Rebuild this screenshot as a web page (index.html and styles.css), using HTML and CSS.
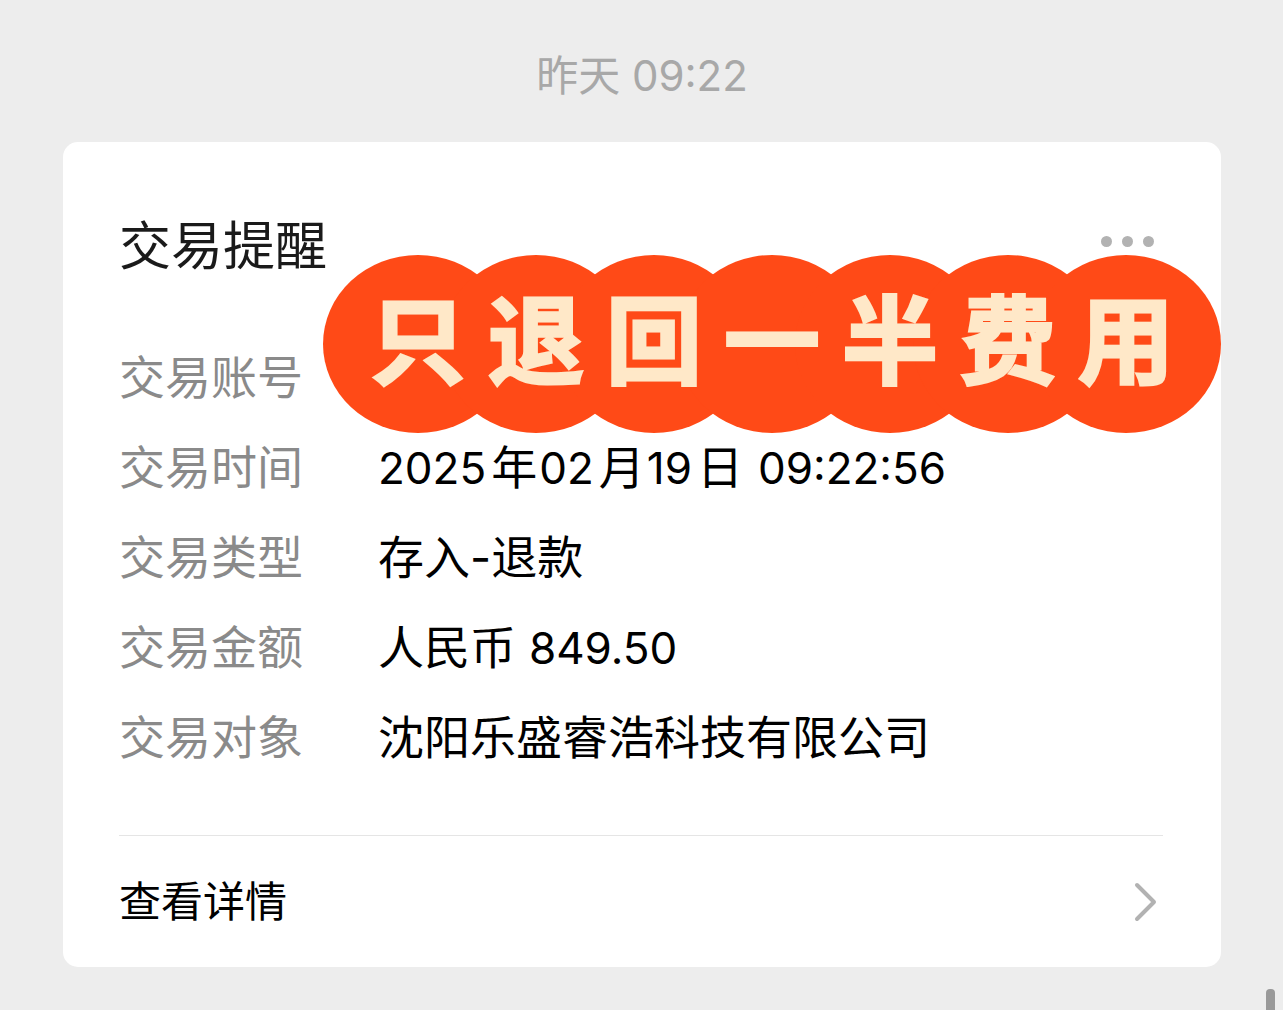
FILE: index.html
```
<!DOCTYPE html>
<html lang="zh-CN">
<head>
  <meta charset="UTF-8" />
  <meta name="viewport" content="width=device-width, initial-scale=1.0"/>
  <title>交易提醒</title>
  <link rel="stylesheet" href="styles.css">
</head>
<body>
  <main class="chat">
    <time class="chat-time">昨天 09:22</time>

    <article class="card">
      <header class="card-header">
        <h1>交易提醒</h1>
        <button class="more-btn" type="button" aria-label="更多">
          <span class="dot"></span>
          <span class="dot"></span>
          <span class="dot"></span>
        </button>
      </header>

      <dl class="details">
        <dt>交易账号</dt>
        <dd></dd>
        <dt>交易时间</dt>
        <dd class="date"><span class="num">2025</span>年<span class="num">02</span>月<span class="num">19</span>日 <span class="num">09:22:56</span></dd>
        <dt>交易类型</dt>
        <dd>存入-退款</dd>
        <dt>交易金额</dt>
        <dd>人民币 <span class="num">849.50</span></dd>
        <dt>交易对象</dt>
        <dd>沈阳乐盛睿浩科技有限公司</dd>
      </dl>

      <a class="card-link" href="#">
        <span>查看详情</span>
        <svg class="chevron" viewBox="0 0 24 40" aria-hidden="true">
          <path d="M3 3 L20 20 L3 37" />
        </svg>
      </a>

      <!-- sticker over the account number -->
      <p class="sticker">
        <span>只</span><span>退</span><span>回</span><span>一</span><span>半</span><span>费</span><span>用</span>
      </p>
    </article>
  </main>
  <div class="scroll-thumb"></div>
</body>
</html>
```
FILE: styles.css
```
:root {
  --bg: #ededed;
  --card: #ffffff;
  --text: #000000;
  --title: #1a1a1a;
  --label: #8a8a8a;
  --muted: #a8a8a8;
  --icon: #b2b2b2;
  --border: #e5e5e5;
  --sticker: #ff4a17;
  --sticker-text: #ffe8c8;
}

* {
  box-sizing: border-box;
  margin: 0;
  padding: 0;
}

body {
  position: relative;
  min-height: 100vh;
  overflow: hidden;
  font-family: 'Inter', 'Noto Sans CJK SC', sans-serif;
  font-weight: 400;
  background-color: var(--bg);
  color: var(--text);
}

.chat {
  padding: 46px 62px 43px 63px;
}

.chat-time {
  display: block;
  margin-bottom: 36px;
  font-size: 42px;
  line-height: 60px;
  text-align: center;
  color: var(--muted);
}

.card {
  position: relative;
  padding: 75px 58px 0 56px;
  border-radius: 15px;
  background-color: var(--card);
}

.card-header {
  display: flex;
  justify-content: space-between;
  margin-bottom: 70px;
}

h1 {
  font-size: 52px;
  font-weight: 400;
  line-height: 60px;
  color: var(--title);
}

.more-btn {
  display: flex;
  gap: 10px;
  align-items: center;
  height: 48px;
  padding: 0 9px;
  border: none;
  background: none;
  cursor: pointer;
}

.dot {
  width: 11px;
  height: 11px;
  border-radius: 50%;
  background-color: var(--icon);
}

.details {
  display: grid;
  grid-template-columns: max-content 1fr;
  grid-auto-rows: 60px;
  gap: 30px 75px;
  font-size: 46px;
  line-height: 60px;
}

.details dt {
  color: var(--label);
}

.num {
  font-size: 44px;
}

.date .num {
  margin-right: 5px;
}

.date .num + .num {
  margin-left: 2px;
}

.card-link {
  display: flex;
  justify-content: space-between;
  align-items: center;
  margin-top: 68px;
  padding: 36px 5px 35px 0;
  border-top: 1px solid var(--border);
  font-size: 42px;
  line-height: 60px;
  color: var(--text);
  text-decoration: none;
}

.chevron {
  width: 24px;
  height: 40px;
  fill: none;
  stroke: var(--icon);
  stroke-width: 4;
  stroke-linecap: round;
  stroke-linejoin: round;
}

.sticker {
  position: absolute;
  z-index: 0;
  top: 113px;
  right: 0;
  display: flex;
  padding: 0 36px;
  color: var(--sticker-text);
  font-size: 96px;
  font-weight: 700;
  line-height: 172px;
  text-align: center;
  -webkit-text-stroke: 3px var(--sticker-text);
}

.sticker span {
  position: relative;
  width: 118px;
  height: 178px;
}

/* round blob behind each character, wider than its cell */
.sticker span::before {
  content: '';
  position: absolute;
  z-index: -1;
  inset: 0 -36px;
  border-radius: 50%;
  background-color: var(--sticker);
}

.scroll-thumb {
  position: absolute;
  right: 8px;
  bottom: 0;
  width: 9px;
  height: 21px;
  border-radius: 4px 4px 0 0;
  background-color: #999999;
}
```
